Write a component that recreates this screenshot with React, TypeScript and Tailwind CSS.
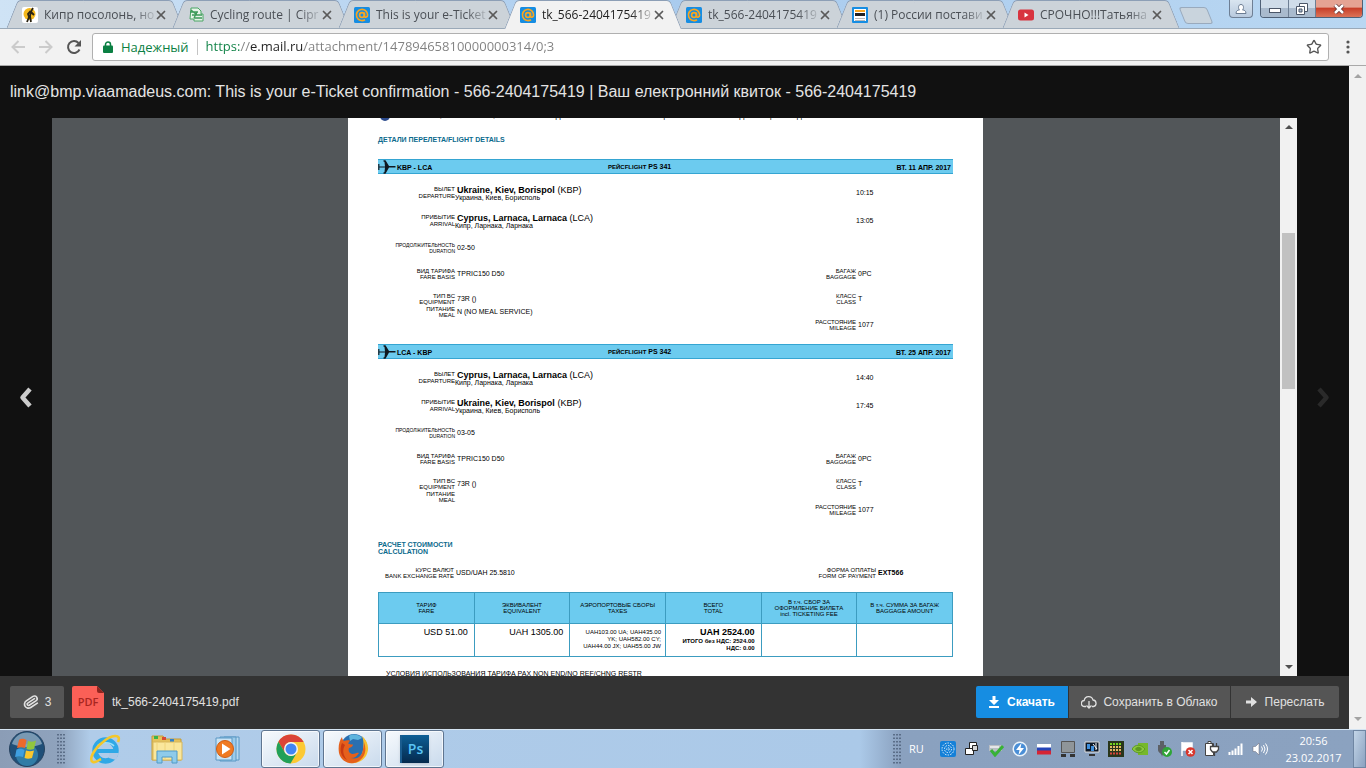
import React from 'react';
import clsx from 'clsx';
import { X, Paperclip, Star } from 'lucide-react';

interface Tab {
  title: string;
  icon: React.ReactNode;
  active?: boolean;
}

interface Flight {
  route: string;
  number: string;
  date: string;
  from: string[];
  to: string[];
  departure: string;
  arrival: string;
  duration: string;
  meal: string;
}

const MailIcon = () => (
  <svg viewBox="0 0 16 16" className="h-4 w-4">
    <rect width="16" height="16" rx="1.5" fill="#168de2" />
    <g fill="none" stroke="#f9a620" strokeWidth="1.7">
      <circle cx="8" cy="8" r="2.4" />
      <path d="M10.4 5.6v3.2c0 2.2 3.2 1.8 3.2-.8A5.6 5.6 0 1 0 11 12.7" />
    </g>
  </svg>
);

const tabs: Tab[] = [
  {
    title: 'Кипр посолонь, но',
    icon: (
      <svg viewBox="0 0 16 16" className="h-4 w-4">
        <rect width="16" height="16" rx="2" fill="#fff" />
        <circle cx="7.5" cy="7" r="6" fill="#f4b81c" />
        <path d="M11 1 9 4.500 8 9l1 6M8.500 4 6 7l1 3-2 5M9 5l3 3" fill="none" stroke="#2b2413" strokeWidth="1.800" />
      </svg>
    ),
  },
  {
    title: 'Cycling route | Cipr',
    icon: (
      <svg viewBox="0 0 16 16" className="h-4 w-4">
        <path d="M3 1h7l3 3v3h2v7H6v-2H2z" fill="#e6f3e8" stroke="#4aa564" />
        <path d="M2 5h8M4 8h10M3 3l6 5M6 11h8M9 5l-3 6" fill="none" stroke="#3d9b59" strokeWidth="1.3" />
      </svg>
    ),
  },
  { title: 'This is your e-Ticket', icon: <MailIcon /> },
  { title: 'tk_566-2404175419', icon: <MailIcon />, active: true },
  { title: 'tk_566-2404175419', icon: <MailIcon /> },
  {
    title: '(1) России постави',
    icon: (
      <svg viewBox="0 0 16 16" className="h-4 w-4">
        <rect width="16" height="16" rx="1" fill="#168de2" />
        <path d="M2 2h12v12H2z" fill="#fff" />
        <path d="M3 3h10v2H3z" fill="#f9a620" />
        <path d="M3 6h10v3H3z" fill="#222" />
        <path d="M3 11.500h10M3 13.500h10" stroke="#b9b9b9" />
      </svg>
    ),
  },
  {
    title: 'СРОЧНО!!!Татьяна',
    icon: (
      <svg viewBox="0 0 16 16" className="h-4 w-4">
        <rect y="2.500" width="16" height="11" rx="2.500" fill="#d8343f" />
        <path d="m6.500 5.500 4 2.500-4 2.500z" fill="#fff" />
      </svg>
    ),
  },
];

const flights: Flight[] = [
  {
    route: 'KBP - LCA',
    number: 'PS 341',
    date: 'ВТ. 11 АПР. 2017',
    from: ['Ukraine, Kiev, Borispol', '(KBP)', 'Украина, Киев, Борисполь'],
    to: ['Cyprus, Larnaca, Larnaca', '(LCA)', 'Кипр, Ларнака, Ларнака'],
    departure: '10:15',
    arrival: '13:05',
    duration: '02-50',
    meal: 'N (NO MEAL SERVICE)',
  },
  {
    route: 'LCA - KBP',
    number: 'PS 342',
    date: 'ВТ. 25 АПР. 2017',
    from: ['Cyprus, Larnaca, Larnaca', '(LCA)', 'Кипр, Ларнака, Ларнака'],
    to: ['Ukraine, Kiev, Borispol', '(KBP)', 'Украина, Киев, Борисполь'],
    departure: '14:40',
    arrival: '17:45',
    duration: '03-05',
    meal: '',
  },
];

const fareHeads = [
  ['ТАРИФ', 'FARE'],
  ['ЭКВИВАЛЕНТ', 'EQUIVALENT'],
  ['АЭРОПОРТОВЫЕ СБОРЫ', 'TAXES'],
  ['ВСЕГО', 'TOTAL'],
  ['В т.ч. СБОР ЗА', 'ОФОРМЛЕНИЕ БИЛЕТА', 'incl. TICKETING FEE'],
  ['В т.ч. СУММА ЗА БАГАЖ', 'BAGGAGE AMOUNT'],
];

const BrowserTab = ({ title, icon, active }: Tab) => (
  <div
    className={clsx(
      'relative -mr-3 flex w-[178px] shrink-0 items-center px-4 pt-px',
      'before:absolute before:inset-y-0 before:left-1.5 before:w-1/2 before:skew-x-[-22deg] before:rounded-tl before:border-l before:border-t before:border-[#8d9fb6]',
      'after:absolute after:inset-y-0 after:right-1.5 after:w-1/2 after:skew-x-[22deg] after:rounded-tr after:border-r after:border-t after:border-[#8d9fb6]',
      active
        ? 'z-10 -mb-px h-[29px] before:bg-[#f2f2f2] after:bg-[#f2f2f2]'
        : 'h-7 before:bg-[#ccd3d9] after:bg-[#ccd3d9]',
    )}
  >
    <button className="relative z-10 flex min-w-0 flex-1 items-center gap-1.5 text-left">
      <span className="shrink-0">{icon}</span>
      <span
        className={clsx(
          'flex-1 whitespace-nowrap text-[12px] leading-5 [mask-image:linear-gradient(to_right,#000_82%,#0003)]',
          active ? 'text-[#222]' : 'text-[#4a4f55]',
        )}
      >
        {title}
      </span>
    </button>
    <button aria-label="Close tab" className="relative z-10 ml-0.5 text-[#5a5a5a]">
      <X className="h-3.5 w-3.5" strokeWidth={3} />
    </button>
  </div>
);

const Plane = () => (
  <svg viewBox="0 0 18 14" className="h-3.5 w-[18px]">
    <path d="M1 6.500h6L6.500 2 5 1l1-.8h1.500L11 6h6.500v1.500H11L7.500 13.800H6L5 13l1.500-1L7 7.500H1z" fill="#101820" />
    <path d="M.8 4v6" stroke="#101820" strokeWidth="1.200" />
  </svg>
);

const Label = ({ ru, en, wide }: { ru: string; en: string; wide?: boolean }) => (
  <span className={clsx('text-right text-[6px]', wide ? 'leading-[7px]' : 'leading-[6px]')}>
    {ru}
    <br />
    {en}
  </span>
);

const Place = ({ place }: { place: string[] }) => (
  <div className="-mb-0.5 leading-[8px]">
    <p className="pl-0.5 text-[9px]">
      <b>{place[0]}</b> {place[1]}
    </p>
    <p className="text-[7px]">{place[2]}</p>
  </div>
);

const rowClass = 'grid grid-cols-[77px_1fr_76px_97px]';

const FlightBlock = ({ flight }: { flight: Flight }) => (
  <section className="mb-[13px]">
    <header className="grid h-[15px] grid-cols-3 items-center border-y border-[#35a5d2] bg-[#6ccbef] pr-0.5 text-[7px] font-bold leading-[13px]">
      <span className="flex items-center gap-px">
        <Plane />
        {flight.route}
      </span>
      <span className="pl-[39px]">
        <span className="text-[6px]">РЕЙСFLIGHT</span> {flight.number}
      </span>
      <span className="text-right">{flight.date}</span>
    </header>
    <div className="mt-3 flex flex-col gap-3.5 text-[7px] leading-[12px]">
      <div className={rowClass}>
        <Label wide ru="ВЫЛЕТ" en="DEPARTURE" />
        <Place place={flight.from} />
        <span />
        <time className="leading-[14px]">{flight.departure}</time>
      </div>
      <div className={rowClass}>
        <Label wide ru="ПРИБЫТИЕ" en="ARRIVAL" />
        <Place place={flight.to} />
        <span />
        <time className="leading-[14px]">{flight.arrival}</time>
      </div>
      <div className={rowClass}>
        <span className="text-right text-[5px] leading-[6px]">
          ПРОДОЛЖИТЕЛЬНОСТЬ
          <br />
          DURATION
        </span>
        <span className="pl-0.5">{flight.duration}</span>
      </div>
      <div className={rowClass}>
        <Label ru="ВИД ТАРИФА" en="FARE BASIS" />
        <span className="pl-0.5">TPRIC150 D50</span>
        <Label ru="БАГАЖ" en="BAGGAGE" />
        <span className="pl-0.5">0PC</span>
      </div>
    </div>
    <div className="mt-[13px] flex flex-col gap-px text-[7px] leading-[12px]">
      <div className={rowClass}>
        <Label ru="ТИП ВС" en="EQUIPMENT" />
        <span className="pl-0.5">73R ()</span>
        <Label ru="КЛАСС" en="CLASS" />
        <span className="pl-0.5">T</span>
      </div>
      <div className={rowClass}>
        <Label ru="ПИТАНИЕ" en="MEAL" />
        <span className="pl-0.5">{flight.meal}</span>
      </div>
      <div className={rowClass}>
        <span />
        <span />
        <Label ru="РАССТОЯНИЕ" en="MILEAGE" />
        <span className="pl-0.5">1077</span>
      </div>
    </div>
  </section>
);

const TicketPage = () => (
  <article className="mx-auto w-[635px] shrink-0 bg-white px-[30px] pb-64 text-black">
    <p className="-mt-1.5 flex h-[8px] items-center gap-2 whitespace-nowrap pl-0.5 text-[7px] leading-[8px]">
      <span className="h-2.5 w-2.5 rounded-full bg-[#2b4a8c]" />
      ПРОВЕРЬТЕ, ПОЖАЛУЙСТА, ПРАВИЛЬНОСТЬ ДАННЫХ В МАРШРУТ-КВИТАНЦИИ И СОХРАНИТЕ ЕЕ ДО КОНЦА ПОЕЗДКИ.
    </p>
    <h2 className="my-4 text-[7px] font-bold leading-[7px] text-[#0b6a8d]">ДЕТАЛИ ПЕРЕЛЕТА/FLIGHT DETAILS</h2>
    {flights.map(flight => (
      <FlightBlock key={flight.route} flight={flight} />
    ))}
    <h2 className="mt-[25px] text-[7px] font-bold leading-[7px] text-[#0b6a8d]">
      РАСЧЕТ СТОИМОСТИ
      <br />
      CALCULATION
    </h2>
    <div className="mt-3 grid grid-cols-[76px_1fr_76px_75px] gap-x-0.5 text-[7px] leading-[12px]">
      <Label ru="КУРС ВАЛЮТ" en="BANK EXCHANGE RATE" />
      <span>USD/UAH 25.5810</span>
      <Label ru="ФОРМА ОПЛАТЫ" en="FORM OF PAYMENT" />
      <b>EXT566</b>
    </div>
    <table className="mt-[13px] w-full table-fixed border-collapse">
      <thead>
        <tr className="h-[31px] bg-[#6ccbef]">
          {fareHeads.map(lines => (
            <th key={lines[0]} className="border border-[#3c9cc0] p-0 text-[6px] font-normal leading-[6px]">
              {lines.map(line => (
                <span key={line} className="block whitespace-nowrap">{line}</span>
              ))}
            </th>
          ))}
        </tr>
      </thead>
      <tbody>
        <tr className="h-[33px] text-right align-top [&>td]:border [&>td]:border-[#3c9cc0]">
          <td className="px-1.5 py-0.5 text-[9px] leading-[12px]">USD 51.00</td>
          <td className="px-1.5 py-0.5 text-[9px] leading-[12px]">UAH 1305.00</td>
          <td className="whitespace-nowrap px-1 py-[5px] text-[6px] leading-[7px]">
            UAH103.00 UA; UAH435.00
            <br />
            YK; UAH582.00 CY;
            <br />
            UAH44.00 JX; UAH55.00 JW
          </td>
          <td className="px-1.5 py-0.5 text-[6px] font-bold leading-[7px]">
            <p className="text-[9px] leading-[12px]">UAH 2524.00</p>
            ИТОГО без НДС: 2524.00
            <br />
            НДС: 0.00
          </td>
          <td />
          <td />
        </tr>
      </tbody>
    </table>
    <p className="mt-3 pl-2 text-[7px] leading-[10px]">
      УСЛОВИЯ ИСПОЛЬЗОВАНИЯ ТАРИФА PAX NON END/NO REF/CHNG RESTR
    </p>
  </article>
);

const ArrowUp = () => (
  <svg viewBox="0 0 8 4" className="h-1 w-2"><path d="M0 4 4 0l4 4z" fill="currentColor" /></svg>
);

const ArrowDown = () => (
  <svg viewBox="0 0 8 4" className="h-1 w-2"><path d="m0 0 4 4 4-4z" fill="currentColor" /></svg>
);

const Chevron = ({ flip }: { flip?: boolean }) => (
  <svg viewBox="0 0 14 22" className={clsx('h-[22px] w-3.5', flip && '-scale-x-100')}>
    <path d="M11 3 3.500 11.500 11 20" fill="none" stroke="currentColor" strokeWidth="4.500" strokeLinejoin="round" />
  </svg>
);

const AppButton = ({ label, open, children }: { label: string; open?: boolean; children: React.ReactNode }) => (
  <button
    aria-label={label}
    className={clsx(
      'flex w-[59px] items-center justify-center rounded-[3px]',
      open && 'border border-[#5f7590] bg-linear-to-br from-white/90 to-[#c9daec] shadow-[inset_0_0_0_1px_#ffffffb0]',
    )}
  >
    {children}
  </button>
);

const appIcons = [
  {
    label: 'Internet Explorer',
    icon: (
      <svg viewBox="0 0 32 32" className="h-8 w-8">
        <circle cx="16.500" cy="17.500" r="10.500" fill="none" stroke="#2fa8e6" strokeWidth="5.500" />
        <path d="M20 20h10l-3 7-7-2z" fill="#adc8e6" />
        <path d="M8 16h20.500v4H8z" fill="#2fa8e6" />
        <path d="M8 14c2-5 13-6 17-1" fill="none" stroke="#9be0fa" strokeWidth="1.500" />
        <path d="M29 9c4-9-7-7-15 0C5 16-1 27 4 29c3 1 6-2 8-3" fill="none" stroke="#f4c72b" strokeWidth="2.600" />
      </svg>
    ),
  },
  {
    label: 'Explorer',
    icon: (
      <svg viewBox="0 0 34 32" className="h-8 w-[34px]">
        <path d="M2 3h11l2 3h16v21H2z" fill="#e5c25c" stroke="#c39b3a" />
        <path d="M4 3h4v3H4z" fill="#39b54a" />
        <path d="M12 4h4v3h-4z" fill="#d84a35" />
        <path d="M20 6h4v3h-4z" fill="#3383cb" />
        <path d="M3 9h29v18H3z" fill="#fae79c" stroke="#d6b65b" />
        <path d="M7 9v18M15 9v18M24 9v18" stroke="#efd47b" />
        <path d="M7 30V18h20v12h-5v-6H12v6z" fill="#8ecbea" stroke="#4f9ac8" />
      </svg>
    ),
  },
  {
    label: 'Media Player',
    icon: (
      <svg viewBox="0 0 30 28" className="h-7 w-[30px]">
        <path d="M10 2h15v23H10z" fill="#b8d9ef" stroke="#5b98c4" />
        <path d="M6 2h16v24H6z" fill="#9ccbe9" stroke="#5b98c4" />
        <path d="M2 3h16v22H2z" fill="#c9e3f4" stroke="#5b98c4" />
        <circle cx="11" cy="14" r="8.500" fill="#f07a22" stroke="#d05c12" />
        <path d="m8 8.500 8.500 5.500L8 19.500z" fill="#fff" />
      </svg>
    ),
  },
  {
    label: 'Chrome',
    open: true,
    icon: (
      <svg viewBox="0 0 30 30" className="h-[30px] w-[30px]">
        <circle cx="15" cy="15" r="14.500" fill="#fcc934" />
        <path d="M2.400 7.700A14.500 14.500 0 0 1 27.600 8H15a7 7 0 0 0-6 3.500L8.900 18.500z" fill="#db4437" />
        <path d="M2.400 7.700A14.500 14.500 0 0 0 14.500 29.500L21 18.500a7 7 0 0 1-12.100 0z" fill="#21a05a" />
        <circle cx="15" cy="15" r="7" fill="#f4f4f4" />
        <circle cx="15" cy="15" r="5.500" fill="#4285f4" />
      </svg>
    ),
  },
  {
    label: 'Firefox',
    open: true,
    icon: (
      <svg viewBox="0 0 32 32" className="h-8 w-8">
        <circle cx="17" cy="14" r="13" fill="#2a6fb0" />
        <path d="M12 3c4-3 11-1 13 2l-4 2-5-1-3 2z" fill="#5db4dd" />
        <path d="M25 3c6 5 8 13 4 20-4 6-12 9-19 6 9 0 15-5 16-12 .5-5 1-9-1-14z" fill="#f9c02e" />
        <path d="M27 9c3 8 1 15-5 19C14 33 4 29 2 20 1 14 2 8 5 4c0 2 1 3 2 4 2-1 4-1 6-.500l-2 3c2 1 4 1 5 1 0 2-2 3-4 3.500-1 3 0 5 3 6 3 .5 4-2 7-1-2 3-4 5-8 5 7 2 12-3 12-9 1-3 1-5 1-7z" fill="#e5601c" />
        <path d="M5 10c-3 7-1 14 5 17-4-5-5-10-2-15z" fill="#c93a12" />
      </svg>
    ),
  },
];

const trayIcons: [string, React.ReactNode][] = [
  ['Flower', <><rect width="16" height="16" rx="2" fill="#1480d8" /><g fill="none" stroke="#e4f4ff" strokeDasharray="1.500 1.200"><circle cx="8" cy="8" r="6" /><circle cx="8" cy="8" r="3.500" /><circle cx="8" cy="8" r="1.300" /></g></>],
  ['Windows', <><path d="M5.500 1.500h7v6h-7zM1.500 7.500h8v6h-8z" fill="#fff" stroke="#222" /><path d="M8.500 4.500h5v5h-5z" fill="#d6d6d6" stroke="#222" /></>],
  ['Check', <><path d="M1 4h13v6H1z" fill="#b9bec3" /><path d="M2 5h9v2H2z" fill="#e4e6e8" /><path d="m3 9 4 5 8-9" fill="none" stroke="#38b236" strokeWidth="3" /></>],
  ['Power', <><circle cx="8" cy="8" r="6.800" fill="#4a8ed6" stroke="#eaf3fb" strokeWidth="1.500" /><path d="M9.500 2 4 9h3.500l-1 5L12 7H8.500z" fill="#fff" /></>],
  ['Language', <><path d="M1 3h14v4H1z" fill="#fff" /><path d="M1 6.500h14v4H1z" fill="#2445b8" /><path d="M1 9.500h14v4H1z" fill="#d62433" /></>],
  ['Display', <><path d="M1.500.5h13v11h-13z" fill="#8f9599" stroke="#555" /><path d="M1 13h5v3H1zM10 13h5v3h-5z" fill="#333" /></>],
  ['Monitor', <><path d="M1 1h14v10H1z" fill="#0c1726" stroke="#ddd" /><path d="M3 3h3v5H3zM7 5h3v5H7z" fill="#3f8fdc" /><path d="m9 3 4 5M12 2v7" stroke="#fff" /><path d="M5 13h6v2H5z" fill="#333" /></>],
  ['Grid', <><path d="M0 0h16v16H0z" fill="#28351a" /><path d="M2 3h12" stroke="#71d31d" strokeWidth="2" strokeDasharray="2 1" /><path d="M2 6h12M2 9h12" stroke="#e5b764" strokeWidth="2" strokeDasharray="2 1" /><path d="M2 12.500h12" stroke="#d74439" strokeWidth="2" strokeDasharray="2 1" /></>],
  ['Nvidia', <><path d="M6 2h10v12H6z" fill="#76b82a" /><path d="M0 8c3-5 9-5 13 0-3 5-9 5-13 0z" fill="#8cc63f" stroke="#5c9a20" /><path d="M3 8c2-3 5-3 7 0-2 3-5 3-7 0z" fill="#5c9a20" /></>],
  ['USB', <><path d="M4 0h4v4H4zM2 4h8v5c0 3-4 4-4 7C6 12 2 12 2 9z" fill="#5c6065" /><circle cx="11" cy="11" r="5" fill="#2fa537" /><path d="m8.500 11 2 2 3-4" fill="none" stroke="#fff" strokeWidth="1.500" /></>],
  ['Action center', <><path d="M2 1v14M3 2h9v7H3z" fill="#fff" stroke="#fff" strokeWidth="1.500" /><circle cx="10.500" cy="11" r="4.800" fill="#d8362c" /><path d="m8.500 9 4 4m0-4-4 4" stroke="#fff" strokeWidth="1.500" /></>],
  ['Battery', <><path d="M1.500 2.500h8v12h-8zM4 .5h3v2H4z" fill="#fff" stroke="#444" /><path d="M6.500 5.500h8v3l-2 2.500h-4l-2-2.500zM8.500 2v3M12.500 2v3M10.500 11v4" fill="#fff" stroke="#444" strokeWidth="1.300" /></>],
  ['Network', <path d="M1.500 11v3M4.500 9.500V14M7.500 7.500V14M10.500 5v9M13.500 2.500V14" stroke="#fff" strokeWidth="2" />],
  ['Volume', <><path d="M1 5.500h2.500L7 2v12l-3.500-3.500H1z" fill="#fff" stroke="#667" strokeWidth=".5" /><path d="M9.500 5.500q2 2.500 0 5M11.500 4q3 4 0 8M13.500 2.500q4 5.500 0 11" fill="none" stroke="#fff" /></>],
];

const Grip = () => (
  <svg viewBox="0 0 8 30" className="h-[30px] w-2 shrink-0">
    <path d="M1 0v30M4 0v30M7 0v30" stroke="#4a5c75" strokeWidth="1.500" strokeDasharray="1.500 2" />
  </svg>
);

const BrowserChrome = () => (
  <>
    <div className="flex h-[29px] shrink-0 items-start border-b border-[#9aa9b8] bg-linear-to-r from-[#cfe3f5] via-[#a9cbee] to-[#b9d7f2] pl-1.5">
      <div className="flex min-w-0 flex-1">
        {tabs.map((tab, index) => (
          <BrowserTab key={index} {...tab} />
        ))}
        <button
          aria-label="New tab"
          className="ml-3.5 mt-[7px] h-[17px] w-7 shrink-0 skew-x-[22deg] rounded-[3px] border border-[#99aabd] bg-[#c9d4dd]"
        />
      </div>
      <button aria-label="Profile" className="mr-[7px] flex h-[18px] w-6 items-center justify-center rounded-b border border-t-0 border-[#6e7f94] bg-linear-to-b from-[#d9e5f0] to-[#b9cade]">
        <svg viewBox="0 0 12 12" className="h-3 w-3">
          <path d="M1 10.500c0-3 2-3.500 3.500-3.500C3 5.500 3 1.500 6 1.500S9 5.500 7.500 7c1.500 0 3.500.5 3.500 3.500z" fill="#fff" stroke="#6b7c92" />
        </svg>
      </button>
      <div className="mr-[3px] flex h-[18px] overflow-hidden rounded-b border border-t-0 border-[#4f6076]">
        <button aria-label="Minimize" className="flex w-7 items-end justify-center border-r border-[#6e7f94] bg-linear-to-b from-[#cfdce9] from-50% to-[#a9bacd] to-50% pb-1">
          <span className="h-[5px] w-3 border border-[#4b5668] bg-white" />
        </button>
        <button aria-label="Restore" className="flex w-[27px] items-center justify-center border-r border-[#6e7f94] bg-linear-to-b from-[#cfdce9] from-50% to-[#a9bacd] to-50%">
          <svg viewBox="0 0 12 12" className="h-3 w-3">
            <path d="M3.500.5h8v8h-8z" fill="#fff" stroke="#4b5668" />
            <path d="M.5 3.500h8v8h-8z" fill="#fff" stroke="#4b5668" />
            <path d="M3 6h3v3H3z" fill="#a9bacd" stroke="#4b5668" />
          </svg>
        </button>
        <button aria-label="Close" className="flex w-[46px] items-center justify-center bg-linear-to-b from-[#e5a393] from-40% via-[#c8402a] via-50% to-[#dc7257]">
          <svg viewBox="0 0 12 10" className="h-2.5 w-3">
            <path d="m2 1 8 8m0-8L2 9" stroke="#5c2b2b" strokeWidth="4" />
            <path d="m2 1 8 8m0-8L2 9" stroke="#fff" strokeWidth="2.500" />
          </svg>
        </button>
      </div>
    </div>
    <div className="flex h-[37px] shrink-0 items-center border-b border-[#a9a9a9] bg-[#f2f2f2] pl-2.5 pr-[15px]">
      <button aria-label="Back" className="mr-3 text-[#cbcbcb]">
        <svg viewBox="0 0 16 16" className="h-4 w-4"><path d="M15 8H2.500m6-6-6 6 6 6" fill="none" stroke="currentColor" strokeWidth="2" /></svg>
      </button>
      <button aria-label="Forward" className="mr-3 text-[#cbcbcb]">
        <svg viewBox="0 0 16 16" className="h-4 w-4"><path d="M1 8h12.500m-6-6 6 6-6 6" fill="none" stroke="currentColor" strokeWidth="2" /></svg>
      </button>
      <button aria-label="Reload" className="mr-2.5 text-[#555]">
        <svg viewBox="0 0 16 16" className="h-4 w-4">
          <path d="M13.500 10.500A6 6 0 1 1 12.500 4" fill="none" stroke="currentColor" strokeWidth="2" />
          <path d="M15 1v6.500H8.500z" fill="currentColor" />
        </svg>
      </button>
      <div className="flex h-7 flex-1 items-center rounded-[3px] border border-[#b0b0b0] bg-white pl-2.5 pr-1.5">
        <svg viewBox="0 0 10 12" className="h-3 w-2.5">
          <path d="M2.500 6V3.500a2.500 2.500 0 0 1 5 0V6" fill="none" stroke="#0b8043" strokeWidth="1.500" />
          <rect y="4.500" width="10" height="7.500" rx="1" fill="#0b8043" />
        </svg>
        <label htmlFor="url" className="ml-2 border-r border-[#c4c4c4] pr-2 text-[13px] leading-4 text-[#0b8043]">Надежный</label>
        <input
          id="url"
          type="text"
          defaultValue="https://e.mail.ru/attachment/14789465810000000314/0;3"
          className="ml-2 min-w-0 flex-1 bg-[linear-gradient(to_right,#0b8043_35px,#808080_35px_44px,#222_44px_98px,#808080_98px)] bg-clip-text text-[13px] text-transparent outline-none"
        />
        <button aria-label="Bookmark" className="text-[#555]">
          <Star className="h-4 w-4" strokeWidth={2} />
        </button>
      </div>
      <button aria-label="Menu" className="ml-4 text-[#555]">
        <svg viewBox="0 0 6 16" className="h-4 w-1.5" fill="currentColor">
          <circle cx="3" cy="3" r="1.600" /><circle cx="3" cy="8" r="1.600" /><circle cx="3" cy="13" r="1.600" />
        </svg>
      </button>
    </div>
  </>
);

const Taskbar = () => (
  <footer className="flex h-[39px] shrink-0 border-t border-[#d5e4f2] bg-[linear-gradient(to_right,#8b9db6_0,#8fa3bd_60px,#b0cce9_90px,#abc9e8_860px,#8aa1bf_900px,#8ba2c0)]">
    <button aria-label="Start" className="ml-[9px] mr-3 self-center">
      <svg viewBox="0 0 36 36" className="h-9 w-9">
        <circle cx="18" cy="18" r="17.500" fill="#1f4f78" stroke="#27425f" />
        <circle cx="18" cy="24" r="11" fill="#3d9bc4" opacity=".6" />
        <path d="M3 13a15.500 15.500 0 0 1 30 0c-10 4-20 4-30 0z" fill="#9fb9cc" opacity=".7" />
        <path d="M10 9c3-2 5-1 7.500 0l-1.500 8c-3-1-5-1-8 0z" fill="#ec6a2c" />
        <path d="M19 10c3 1 5 1 8-.5L25 18c-3 1-5 1-7.500 0z" fill="#91c63e" />
        <path d="M7.500 18.500c3-1 5-1 8 .5L14 26c-3-1-5-1-8 0z" fill="#3f9fe0" />
        <path d="M17 19.500c3 1 5 1 8 0L23 27c-3 1-5 1-7.500 0z" fill="#fbc72d" />
      </svg>
    </button>
    <div className="flex items-center"><Grip /></div>
    <div className="ml-2.5 flex gap-[3px]">
      {appIcons.map(({ label, open, icon }) => (
        <AppButton key={label} label={label} open={open}>{icon}</AppButton>
      ))}
      <AppButton label="Photoshop" open>
        <span className="flex h-7 w-[29px] items-center justify-center border-l-2 border-[#1a5c8f] bg-linear-to-b from-[#0d5f96] to-[#052a4e] font-['Open_Sans',sans-serif] text-[14px] font-semibold leading-none text-[#5ac4f5] shadow">
          Ps
        </span>
      </AppButton>
    </div>
    <div className="ml-auto flex items-center text-white">
      <Grip />
      <span className="ml-2 w-[31px] text-[11px] leading-4">RU</span>
      <div className="flex gap-2">
        {trayIcons.map(([label, icon]) => (
          <svg key={label} viewBox="0 0 16 16" role="img" aria-label={label} className="h-4 w-4">{icon}</svg>
        ))}
      </div>
      <time className="w-[85px] pl-1.5 text-center text-[11px] leading-[17px]">
        20:56
        <br />
        23.02.2017
      </time>
    </div>
    <button aria-label="Show desktop" className="w-[13px] border border-[#6f86a3] bg-linear-to-br from-[#c3d5e8] to-[#8ba2c0]" />
  </footer>
);

const fileButton = 'flex h-8 items-center justify-center text-[12px] leading-4';

export default function App() {
  return (
    <div className="flex h-screen flex-col overflow-hidden font-['Open_Sans',sans-serif]">
      <BrowserChrome />
      <main className="flex min-h-0 flex-1 font-['Liberation_Sans',Arial,sans-serif]">
        <div className="flex min-w-0 flex-1 flex-col bg-[#111]">
          <h1 className="h-[52px] shrink-0 truncate px-2.5 text-[16px] leading-[52px] text-[#e4e4e4]">
            link@bmp.viaamadeus.com: This is your e-Ticket confirmation - 566-2404175419 | Ваш електронний квиток - 566-2404175419
          </h1>
          <div className="flex min-h-0 flex-1">
            <button aria-label="Previous" className="flex w-[52px] items-center justify-center text-[#ccc]"><Chevron /></button>
            <div className="flex min-w-0 flex-1 overflow-hidden bg-[#525659]">
              <div className="flex min-w-0 flex-1 items-start pr-px">
                <TicketPage />
              </div>
              <div className="flex w-[17px] flex-col items-center bg-[#f1f1f1] py-[7px] text-[#505050]">
                <ArrowUp />
                <div className="mt-[104px] h-[156px] w-[13px] bg-[#c1c1c1]" />
                <div className="mt-auto"><ArrowDown /></div>
              </div>
            </div>
            <button aria-label="Next" className="flex w-[52px] items-center justify-center text-[#2a2a2a]"><Chevron flip /></button>
          </div>
          <div className="flex h-[53px] shrink-0 items-start bg-[#333] px-2.5 pt-2.5 text-[#e0e0e0]">
            <button className={clsx(fileButton, 'mr-2 w-[54px] gap-1.5 rounded-[2px] bg-[#555]')}>
              <Paperclip className="h-4 w-4 rotate-12" strokeWidth={2.5} />3
            </button>
            <svg viewBox="0 0 32 32" className="h-8 w-8">
              <path d="M2 0h23l7 7v23q0 2-2 2H2q-2 0-2-2V2q0-2 2-2z" fill="#fb6057" />
              <path d="M25 0v5q0 2 2 2h5z" fill="#8f251f" />
              <text x="16" y="20" textAnchor="middle" fontSize="11" fontWeight="600" fill="#a82620" className="font-['Open_Sans',sans-serif]">PDF</text>
            </svg>
            <span className="ml-2 text-[12px] leading-8">tk_566-2404175419.pdf</span>
            <div className="ml-auto flex gap-px overflow-hidden rounded-[2px]">
              <button className={clsx(fileButton, 'w-[92px] gap-2 bg-[#168de2] font-bold text-white')}>
                <svg viewBox="0 0 10 12" className="h-3 w-2.5" fill="currentColor"><path d="M3.500 0h3v4H10L5 9 0 4h3.500zM0 10h10v2H0z" /></svg>
                Скачать
              </button>
              <button className={clsx(fileButton, 'w-[161px] gap-1.5 bg-[#555]')}>
                <svg viewBox="0 0 16 14" className="h-3.5 w-4" fill="none" stroke="currentColor" strokeWidth="1.300">
                  <path d="M5 11.500H3.500a3 3 0 0 1-.3-6A4.500 4.500 0 0 1 12 5a3.300 3.300 0 0 1 .5 6.500H11M8 6v7M5.500 10.500 8 13l2.500-2.500" />
                </svg>
                Сохранить в Облако
              </button>
              <button className={clsx(fileButton, 'w-[108px] gap-2 bg-[#555]')}>
                <svg viewBox="0 0 11 10" className="h-2.5 w-[11px]" fill="currentColor"><path d="M0 3.500h5V0l6 5-6 5V6.500H0z" /></svg>
                Переслать
              </button>
            </div>
          </div>
        </div>
        <div className="flex w-[17px] shrink-0 flex-col items-center justify-between bg-[#f1f1f1] py-2 text-[#a3a3a3]">
          <ArrowUp />
          <ArrowDown />
        </div>
      </main>
      <Taskbar />
    </div>
  );
}
